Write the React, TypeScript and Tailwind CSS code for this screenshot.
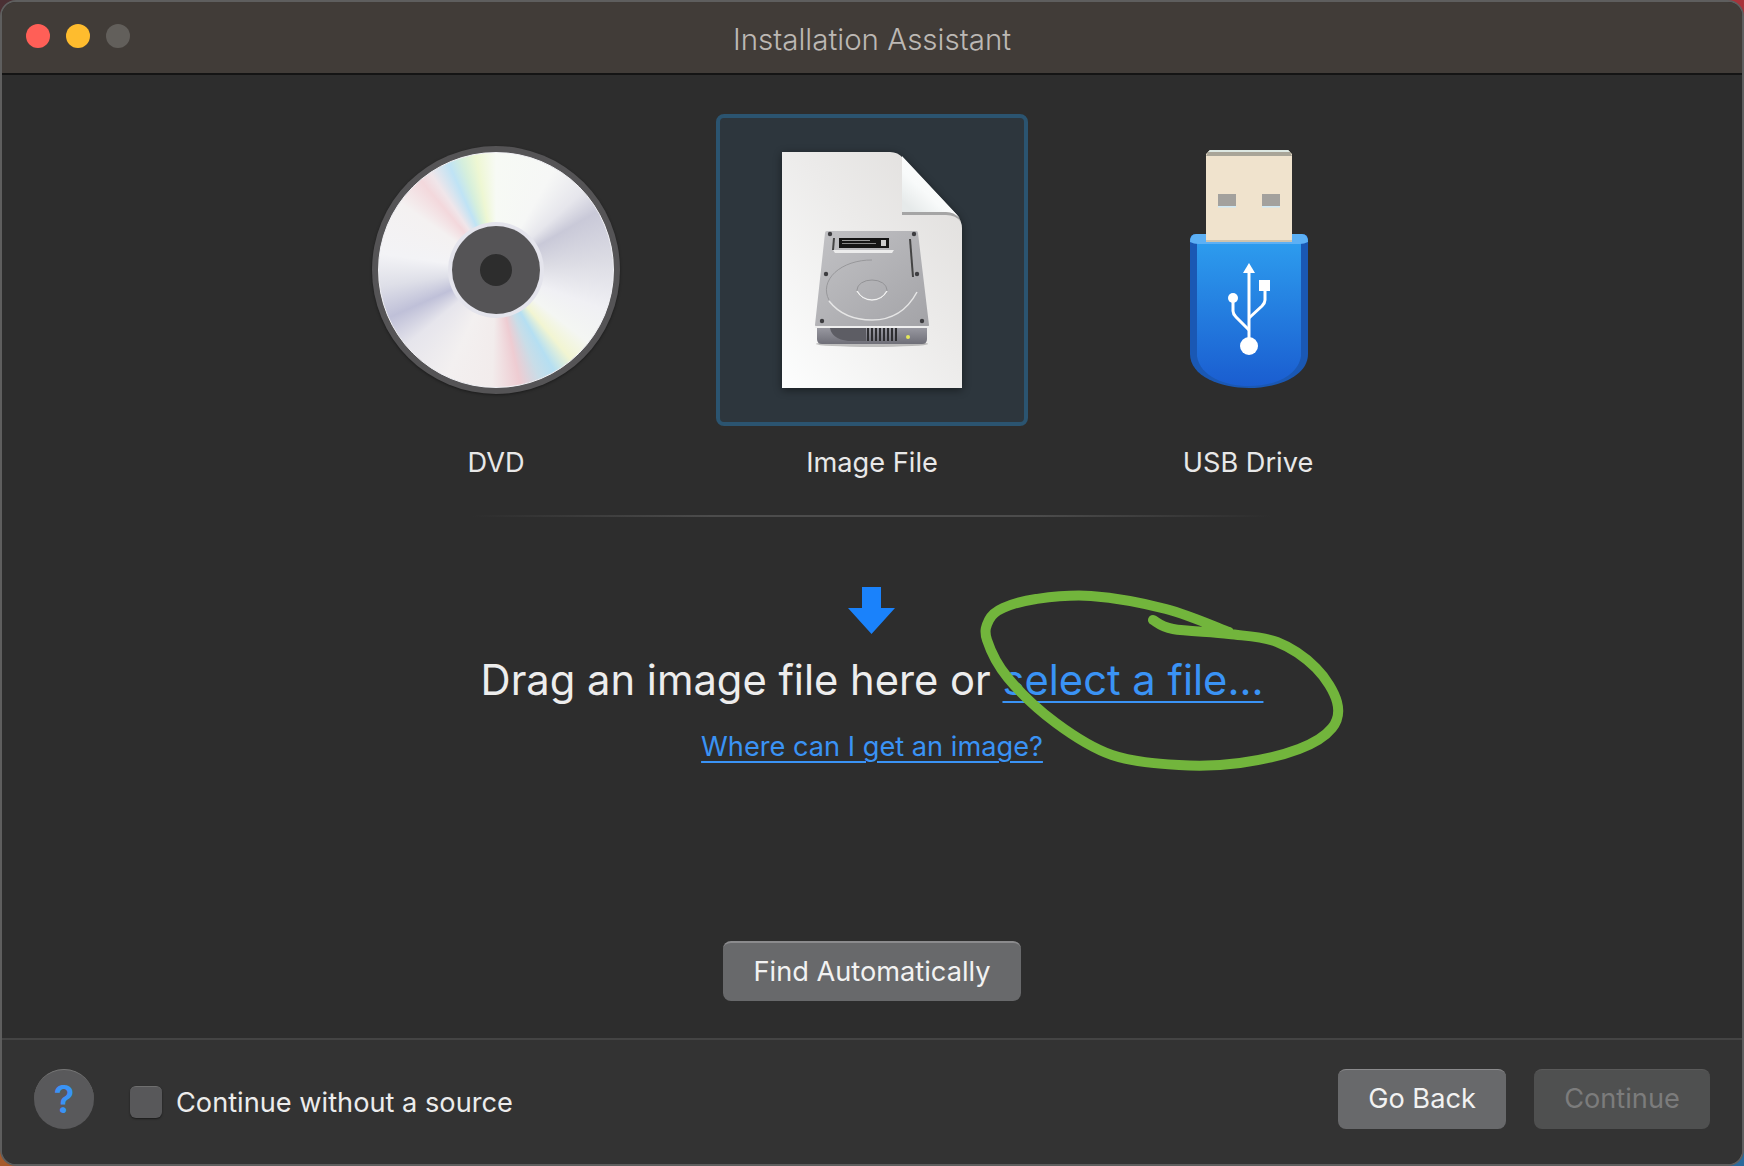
const font = { fontFamily: "Inter, 'Liberation Sans', sans-serif" };

// smooth line through the points of the marker stroke
function smoothPath(pts: number[][]) {
  let d = `M${pts[0][0]} ${pts[0][1]}`;
  for (let i = 0; i < pts.length - 1; i++) {
    const p0 = pts[i - 1] || pts[i];
    const p1 = pts[i];
    const p2 = pts[i + 1];
    const p3 = pts[i + 2] || p2;
    const c1x = p1[0] + (p2[0] - p0[0]) / 6;
    const c1y = p1[1] + (p2[1] - p0[1]) / 6;
    const c2x = p2[0] - (p3[0] - p1[0]) / 6;
    const c2y = p2[1] - (p3[1] - p1[1]) / 6;
    d += `C${c1x} ${c1y} ${c2x} ${c2y} ${p2[0]} ${p2[1]}`;
  }
  return d;
}

const markerPoints = [
  [1153, 620],
  [1173, 629],
  [1229, 634],
  [1277, 642],
  [1316, 668],
  [1337, 702],
  [1332, 728],
  [1299, 749],
  [1240, 763],
  [1179, 765],
  [1112, 755],
  [1056, 723],
  [1008, 678],
  [987, 640],
  [989, 620],
  [1003, 608],
  [1036, 599],
  [1091, 596],
  [1166, 609],
  [1229, 632],
];

function Disc() {
  return (
    <div className="w-[248px] h-[248px] rounded-full bg-[#555456] flex items-center justify-center shadow-[0_1px_3px_rgba(0,0,0,0.4)]">
      <div className="w-[236px] h-[236px] rounded-full border border-[#f2f2f6] flex items-center justify-center bg-[conic-gradient(#f7faf5_0deg,#f6f7f6_30deg,#e6e6ec_48deg,#c9c9d8_60deg,#dcdce4_85deg,#f0f0f4_110deg,#f4f6f3_128deg,#f2f5d2_140deg,#b5dff2_150deg,#c8dde8_158deg,#eeccd2_168deg,#f2ecec_182deg,#f3f0f0_205deg,#e6e5ec_230deg,#bfc0d8_246deg,#dedfe8_262deg,#f3f3f6_278deg,#f4f1f1_305deg,#f3d8dc_320deg,#f0e6ea_326deg,#bfe3f5_336deg,#d6efdc_343deg,#eef7d3_350deg,#f7faf5_360deg)]">
        <div className="w-[96px] h-[96px] rounded-full bg-[#e4e4ec] flex items-center justify-center">
          <div className="w-[88px] h-[88px] rounded-full bg-[#555456] flex items-center justify-center">
            <div className="w-[32px] h-[32px] rounded-full bg-[#2d2d2d]" />
          </div>
        </div>
      </div>
    </div>
  );
}

function ImageFileIcon() {
  const screws = [
    [48, 82],
    [132, 82],
    [44, 122],
    [135, 122],
    [40, 169],
    [140, 169],
  ];
  return (
    <svg width="180" height="236" viewBox="0 0 180 236" className="overflow-visible drop-shadow-[0_2px_4px_rgba(0,0,0,0.45)]">
      <defs>
        <linearGradient id="page" x1="1" y1="0" x2="0" y2="1">
          <stop offset="0" stopColor="#dfdddb" />
          <stop offset="0.45" stopColor="#ecebea" />
          <stop offset="1" stopColor="#fdfefe" />
        </linearGradient>
        <linearGradient id="fold" x1="0.8" y1="0.2" x2="0.2" y2="0.9">
          <stop offset="0" stopColor="#ffffff" />
          <stop offset="0.6" stopColor="#f8fafa" />
          <stop offset="1" stopColor="#e6eaea" />
        </linearGradient>
        <linearGradient id="top" x1="0" y1="0" x2="1" y2="1">
          <stop offset="0" stopColor="#c2c2c5" />
          <stop offset="1" stopColor="#a3a3a7" />
        </linearGradient>
        <linearGradient id="front" x1="0" y1="0" x2="0" y2="1">
          <stop offset="0" stopColor="#9a9aa2" />
          <stop offset="1" stopColor="#6f6f78" />
        </linearGradient>
      </defs>
      <path d="M0 0H108Q116 0 121 6L174 62Q180 69 180 76V236H0Z" fill="url(#page)" />
      <path d="M120 4L178 66Q172 60 164 60H120Z" fill="url(#fold)" />
      <path d="M120 60H164Q172 60 177 66L179 70Q174 63 164 63H120Z" fill="#a5a5a5" />
      <ellipse cx="90" cy="192" rx="56" ry="3" fill="#000" opacity="0.22" />
      <path d="M35 175H145V187Q145 192 140 192H40Q35 192 35 187Z" fill="url(#front)" />
      <path d="M48 176H84V189H66Q50 187 48 176Z" fill="#5d5d64" />
      <path d="M43 81Q43 79 45 79H134Q136 79 136 81L147 173Q147 175 145 175H35Q33 175 33 173Z" fill="url(#top)" />
      <path d="M33 174H147V176H33Z" fill="#efefef" />
      <rect x="57" y="86" width="50" height="10" fill="#151515" />
      <rect x="60" y="88" width="28" height="1" fill="#999" />
      <rect x="60" y="91" width="34" height="1" fill="#888" />
      <rect x="99" y="88" width="5" height="6" fill="#ccc" />
      <path d="M51 98H112L110 101H53Z" fill="#ececec" />
      <path d="M51 86L53 86L52 98L50 98Z" fill="#444" />
      <path d="M127 87L129 87L132 125L130 125Z" fill="#444" />
      <path d="M47 148A45 30 0 0 1 90 108" fill="none" stroke="#98989b" strokeWidth="1" />
      <path d="M47 149Q62 168 90 168Q120 168 135 140" fill="none" stroke="#e6e6e6" strokeWidth="1.5" />
      <ellipse cx="90" cy="138" rx="15" ry="10" fill="none" stroke="#939396" strokeWidth="1" />
      <path d="M75 139Q80 148 90 148Q100 148 105 139" fill="none" stroke="#f2f2f2" strokeWidth="1.5" />
      {screws.map(([x, y]) => (
        <circle key={x + "-" + y} cx={x} cy={y} r="2.2" fill="#3d3d40" />
      ))}
      {[85, 89, 93, 97, 101, 105, 109, 113].map((x) => (
        <rect key={x} x={x} y="176" width="2" height="13" fill="#2d2d30" />
      ))}
      <circle cx="126" cy="185" r="2" fill="#e4e85a" />
    </svg>
  );
}

function UsbIcon() {
  return (
    <svg width="118" height="238" viewBox="0 0 118 238" className="ml-[2px] -mt-[2px]">
      <defs>
        <linearGradient id="usb-body" x1="0" y1="0" x2="0" y2="1">
          <stop offset="0" stopColor="#2d9cee" />
          <stop offset="1" stopColor="#1a5dd0" />
        </linearGradient>
      </defs>
      <path d="M0 90Q0 84 6 84H112Q118 84 118 90V204C118 226 88 238 59 238C30 238 0 226 0 204Z" fill="#1a58b4" />
      <path d="M7 92H111V206C108 226 84 236 59 236C34 236 10 226 7 206Z" fill="url(#usb-body)" />
      <path d="M0 92Q0 84 6 84H112Q118 84 118 92Q114 94 110 94H8Q4 94 0 92Z" fill="#5cb0f5" />
      <path d="M16 4L20 0H98L102 4V92H16Z" fill="#f0e3cd" />
      <path d="M18 2L20 0H98L100 2L102 6H16Z" fill="#a9a598" />
      <path d="M20 0H98L100 2H18Z" fill="#dde8e2" />
      <path d="M16 90H102V92H16Z" fill="#cfc3ad" />
      <rect x="28" y="44" width="18" height="13" fill="#a3a19d" />
      <rect x="72" y="44" width="18" height="13" fill="#a3a19d" />
      <rect x="28" y="56" width="18" height="1.5" fill="#cfe9f5" />
      <rect x="72" y="56" width="18" height="1.5" fill="#cfe9f5" />
      <g fill="none" stroke="#fff" strokeWidth="3">
        <path d="M59 120V190" />
        <path d="M43 150V161Q43 164 46 167L59 180" />
        <path d="M75 140V150Q75 153 72 156L59 168" />
      </g>
      <path d="M59 113L65 123H53Z" fill="#fff" />
      <circle cx="43" cy="148" r="5" fill="#fff" />
      <rect x="69" y="130" width="11" height="11" fill="#fff" />
      <circle cx="59" cy="196" r="9" fill="#fff" />
    </svg>
  );
}

function SourceTile({ label, selected, children }: { label: string; selected?: boolean; children: React.ReactNode }) {
  return (
    <div className="w-[312px] flex flex-col items-center">
      <div
        className={
          selected
            ? "w-[312px] h-[312px] rounded-[8px] border-4 border-[#2b5470] bg-[#2d363d] flex items-center justify-center"
            : "w-[312px] h-[312px] flex items-center justify-center"
        }
      >
        {children}
      </div>
      <div className="mt-[21px] text-[27.2px] leading-[32px] text-[#e8e8e8]">{label}</div>
    </div>
  );
}

function Button({ label, width, disabled }: { label: string; width: string; disabled?: boolean }) {
  return (
    <button
      className={
        disabled
          ? `${width} h-[60px] rounded-[8px] bg-[#4f5050] border-t border-[#5a5a5a] text-[#7c7c7c] text-[27.2px]`
          : `${width} h-[60px] rounded-[8px] bg-[#68696b] border-t border-[#8b8b8d] text-[#f2f2f2] text-[27.2px]`
      }
    >
      {label}
    </button>
  );
}

export default function App() {
  return (
    <div
      className="relative w-[1744px] h-[1166px] overflow-hidden bg-[conic-gradient(#a8333a_0_25%,#2a6a9c_25%_50%,#a65a2b_50%_75%,#4a3034_75%_100%)]"
      style={font}
    >
      <div className="h-full rounded-[16px] border-2 border-[#5e5e5e] overflow-hidden flex flex-col bg-[#2d2d2d]">
        {/* Title bar */}
        <div className="relative h-[73px] shrink-0 bg-[#413c38] border-b-2 border-[#141414] flex items-center justify-center">
          <div className="absolute left-[24px] top-[22px] flex gap-[16px]">
            <div className="w-[24px] h-[24px] rounded-full bg-[#ff5f57]" />
            <div className="w-[24px] h-[24px] rounded-full bg-[#febc2e]" />
            <div className="w-[24px] h-[24px] rounded-full bg-[#625f5b]" />
          </div>
          <div className="text-[29.5px] font-light text-[#bcb8b4] mt-[4px]">Installation Assistant</div>
        </div>

        {/* Source picker */}
        <div className="flex-1 flex flex-col items-center pt-[39px]">
          <div className="flex gap-[64px]">
            <SourceTile label="DVD">
              <Disc />
            </SourceTile>
            <SourceTile label="Image File" selected>
              <ImageFileIcon />
            </SourceTile>
            <SourceTile label="USB Drive">
              <UsbIcon />
            </SourceTile>
          </div>

          <div className="w-[800px] h-[2px] mt-[36px] bg-[linear-gradient(90deg,transparent,#4c4c4c_30%,#4c4c4c_70%,transparent)]" />

          <svg width="47" height="47" viewBox="0 0 47 47" className="mt-[70px] -ml-[2px]" fill="#1a82fb">
            <path d="M14 0H33V21H47L23.5 47L0 21H14Z" />
          </svg>

          <div className="mt-[22px] text-[41.7px] leading-[48px] text-[#ededed] whitespace-nowrap">
            Drag an image file here or{" "}
            <span className="text-[#3a93f5] underline underline-offset-[6px] decoration-2">select a file...</span>
          </div>
          <div className="mt-[25px] text-[27.2px] leading-[36px] text-[#3a93f5] underline underline-offset-[5px] decoration-2">
            Where can I get an image?
          </div>

          <button className="mt-[176px] w-[298px] h-[60px] rounded-[8px] bg-[#68696b] border-t-2 border-[#8b8b8d] text-[#f2f2f2] text-[27.2px]">
            Find Automatically
          </button>
        </div>

        {/* Footer */}
        <div className="h-[126px] shrink-0 bg-[#333333] border-t-2 border-[#444444] flex items-center pl-[32px] pr-[32px]">
          <div className="w-[60px] h-[60px] mb-[7px] rounded-full bg-[#59595b] border-t border-[#777] flex items-center justify-center text-[38px] font-semibold text-[#3a93f5]">
            ?
          </div>
          <div className="ml-[36px] w-[32px] h-[32px] rounded-[6px] bg-[#58585a] border-t border-[#6f6f6f] shadow-[0_1px_2px_rgba(0,0,0,0.5)]" />
          <div className="ml-[14px] mt-[2px] text-[27.2px] text-[#ececec]">Continue without a source</div>
          <div className="ml-auto mb-[7px] flex gap-[28px]">
            <Button label="Go Back" width="w-[168px]" />
            <Button label="Continue" width="w-[176px]" disabled />
          </div>
        </div>
      </div>

      {/* Hand-drawn marker circle */}
      <svg className="absolute inset-0 pointer-events-none" width="1744" height="1166" viewBox="0 0 1744 1166" fill="none">
        <path d={smoothPath(markerPoints)} stroke="#72b53c" strokeWidth="10" strokeLinecap="round" strokeLinejoin="round" />
      </svg>
    </div>
  );
}
